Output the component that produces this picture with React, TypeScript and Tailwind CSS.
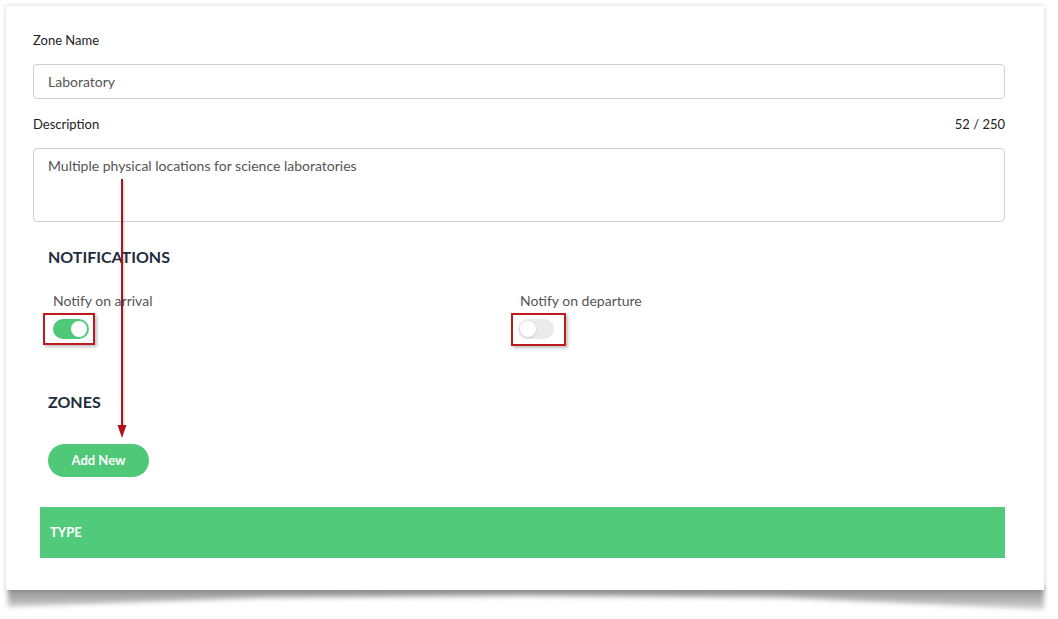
import { ReactNode } from 'react'

function Toggle({ on }: { on: boolean }) {
  return (
    <div
      className={`relative w-[36px] h-[20px] rounded-full ${on ? 'bg-[#4fc978]' : 'bg-[#ebebeb]'}`}
    >
      <div
        className={`absolute top-[2px] w-[16px] h-[16px] rounded-full bg-white ${on ? 'left-[18px]' : 'left-[2px] shadow-[0_1px_2px_rgba(0,0,0,0.15)]'}`}
      />
    </div>
  )
}

function Marked({ children, box }: { children: ReactNode; box: string }) {
  return (
    <div className="relative w-fit">
      {children}
      <div className={`absolute border-2 border-[#bf1b1f] shadow-[2px_2px_3px_rgba(0,0,0,0.25)] ${box}`} />
    </div>
  )
}

export default function App() {
  return (
    <div className="relative w-[1058px] h-[619px] bg-white overflow-hidden font-['Lato',sans-serif]">
      {/* curled shadow under the sheet */}
      <div className="absolute left-[8px] top-[586px] w-[1036px] h-[26px] blur-[2.5px]">
        <div className="w-full h-full bg-gradient-to-b from-[#8a8a8a] via-[#b0b0b0] to-[#e0e0e0] [clip-path:polygon(0_0,100%_0,100%_90%,75%_45%,50%_38%,25%_45%,0_80%)]" />
      </div>

      <div className="relative ml-[6px] mt-[6px] w-[1038px] h-[584px] bg-white shadow-[0_0_5px_rgba(0,0,0,0.18)] pl-[27px] pr-[39px] pt-[26px]">
        <div className="text-[13px] leading-[16px] text-[#222]">Zone Name</div>
        <div className="mt-[16px] h-[35px] border border-[#cfcfcf] rounded-[4px] px-[14px] flex items-center text-[14px] text-[#555]">
          Laboratory
        </div>

        <div className="mt-[17px] flex justify-between text-[13px] leading-[16px] text-[#222]">
          <span>Description</span>
          <span>52 / 250</span>
        </div>
        <div className="mt-[16px] h-[74px] border border-[#cfcfcf] rounded-[4px] px-[14px] pt-[8px] text-[14px] leading-[18px] text-[#555]">
          Multiple physical locations for science laboratories
        </div>

        <div className="mt-[25px] pl-[15px] text-[16px] leading-[20px] font-bold text-[#1f2d3d]">
          NOTIFICATIONS
        </div>

        <div className="mt-[26px] flex">
          <div className="w-[487px] pl-[20px]">
            <div className="text-[14px] leading-[16px] text-[#555]">Notify on arrival</div>
            <div className="mt-[10px]">
              <Marked box="-left-[10px] -top-[6px] w-[52px] h-[32px]">
                <Toggle on />
              </Marked>
            </div>
          </div>
          <div>
            <div className="text-[14px] leading-[16px] text-[#555]">Notify on departure</div>
            <div className="mt-[10px] -ml-[2px]">
              <Marked box="-left-[7px] -top-[6px] w-[55px] h-[33px]">
                <Toggle on={false} />
              </Marked>
            </div>
          </div>
        </div>

        <div className="mt-[53px] pl-[15px] text-[16px] leading-[20px] font-bold text-[#1f2d3d]">
          ZONES
        </div>

        <div className="mt-[32px] pl-[15px]">
          <button className="w-[101px] h-[33px] rounded-full bg-[#4fc978] text-white text-[13px] font-bold">
            Add New
          </button>
        </div>

        <div className="mt-[30px] ml-[7px] h-[51px] bg-[#51cb7b] flex items-center pl-[10px] text-white text-[13px] font-bold">
          TYPE
        </div>

        {/* annotation arrow */}
        <svg className="absolute left-[110px] top-[170px]" width="24" height="264" viewBox="0 0 24 264">
          <line x1="6" y1="3" x2="6" y2="252" stroke="#000" strokeOpacity="0.15" strokeWidth="2" transform="translate(1.5,1.5)" />
          <line x1="6" y1="3" x2="6" y2="252" stroke="#b0121b" strokeWidth="2" />
          <polygon points="1.5,249 10.5,249 6,262" fill="#b0121b" />
        </svg>
      </div>
    </div>
  )
}
